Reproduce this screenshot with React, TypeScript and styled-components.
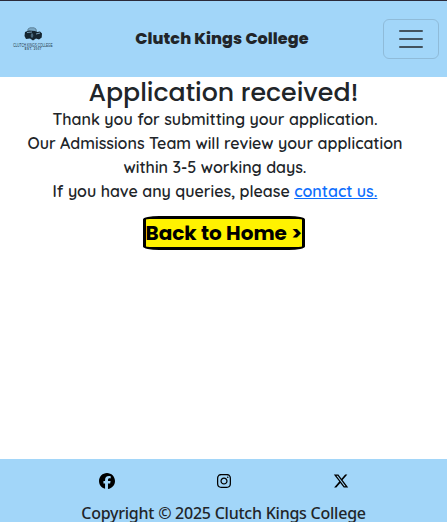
import React from 'react';
import styled, { createGlobalStyle } from 'styled-components';
import { FaFacebook, FaInstagram, FaXTwitter } from 'react-icons/fa6';

const GlobalStyle = createGlobalStyle`
  * { box-sizing: border-box; }
  html, body { margin: 0; }
  body { color: #212529; background: #fff; overflow: hidden; }
`;

const Page = styled.div`
  display: flex;
  flex-direction: column;
  height: 522px;
  border-top: 1px solid #2b2a3a;
  overflow: hidden;
`;

const Navbar = styled.header`
  display: flex;
  align-items: center;
  justify-content: space-between;
  height: 76px;
  flex: none;
  padding: 0 8px;
  background: #a2d6f9;
`;

const LogoLink = styled.a`
  display: flex;
  width: 50px;
  height: 50px;
`;

const Brand = styled.span`
  margin-left: 3px;
  font: 800 16px/24px Poppins, Inter, sans-serif;
  letter-spacing: 0.08px;
  white-space: nowrap;
`;

const Toggler = styled.button`
  display: flex;
  align-items: center;
  justify-content: center;
  width: 56px;
  height: 40px;
  padding: 0;
  border: 1px solid #8fbbd9;
  border-radius: 6px;
  background: transparent;
`;

const Main = styled.main`
  display: flex;
  flex-direction: column;
  align-items: center;
  flex: 1;
  text-align: center;
`;

const Title = styled.h1`
  height: 30px;
  margin: 0;
  padding-top: 1px;
  font: 500 25.22px/30px Poppins, Inter, sans-serif;
  white-space: nowrap;
`;

const Message = styled.p`
  margin: 0;
  font: 600 16px/24px Quicksand, Lato, sans-serif;
  white-space: nowrap;
`;

const Messages = styled.div`
  display: flex;
  flex-direction: column;
  align-items: center;
  padding-right: 17px;
`;

const ContactLink = styled.a`
  color: #0d6efd;
  text-decoration: underline;
`;

const HomeButton = styled.button`
  width: 162px;
  height: 34px;
  margin-top: 13px;
  padding: 0;
  border: 3px solid #000;
  border-radius: 10%;
  background: #fff200;
  color: #000;
  font: 700 20px/28px Poppins, Inter, sans-serif;
  white-space: nowrap;
`;

const Footer = styled.footer`
  flex: none;
  height: 63px;
  padding: 14px 48px 0;
  background: #a2d6f9;
  text-align: center;
`;

const Socials = styled.nav`
  display: grid;
  grid-template-columns: repeat(3, 117px);
  justify-content: center;
  justify-items: center;
  height: 16px;
`;

const SocialLink = styled.a`
  display: flex;
  color: #000;
`;

const Copyright = styled.p`
  margin: 12px 0 0;
  font: 500 16px/24px 'Segoe UI', 'Noto Sans', sans-serif;
  letter-spacing: -0.24px;
  white-space: nowrap;
`;

const Logo = () => (
  <svg width="50" height="50" viewBox="0 0 50 50" aria-label="Clutch Kings College">
    <path d="M19.5 19l.5-4 2-1.2h4l2 1.2.5 3" fill="#7ba9c6" stroke="#53758a" strokeWidth=".8" />
    <path d="M17 18l4-1.500 6 .5 2 1 3-.5 2 2-.3 4-2.700 2-3-1-3 2-3-2-4 .5-1.500-3z" fill="#152530" />
    <path d="M19 18.500l5-.5M28 20l4-1" stroke="#91bdda" strokeWidth=".8" />
    <ellipse cx="24" cy="21.500" rx="1.300" ry="2.300" fill="#48677b" />
    <text x="5.2" y="32.500" textLength="39.500" fontFamily="Liberation Sans, sans-serif" fontWeight="400" fontSize="5" lengthAdjust="spacingAndGlyphs" fill="#263b4a">CLUTCH KINGS COLLEGE</text>
    <text x="16.8" y="36.200" textLength="16.500" fontFamily="Liberation Sans, sans-serif" fontWeight="700" fontSize="2.800" fill="#32495a">EST. 2007</text>
  </svg>
);

const MenuIcon = () => (
  <svg width="30" height="30" viewBox="0 0 30 30">
    <path d="M4 7h22M4 15h22M4 23h22" stroke="#212529" strokeOpacity=".75" strokeWidth="2" strokeLinecap="round" />
  </svg>
);

export default function App() {
  return (
    <>
      <GlobalStyle />
      <Page>
        <Navbar>
          <LogoLink><Logo /></LogoLink>
          <Brand>Clutch Kings College</Brand>
          <Toggler aria-label="Toggle navigation"><MenuIcon /></Toggler>
        </Navbar>
        <Main>
          <Title>Application received!</Title>
          <Messages>
            <Message>Thank you for submitting your application.</Message>
            <Message>Our Admissions Team will review your application</Message>
            <Message>within 3-5 working days.</Message>
            <Message>If you have any queries, please <ContactLink>contact us.</ContactLink></Message>
          </Messages>
          <HomeButton>Back to Home &gt;</HomeButton>
        </Main>
        <Footer>
          <Socials>
            <SocialLink aria-label="Facebook"><FaFacebook size={16} /></SocialLink>
            <SocialLink aria-label="Instagram"><FaInstagram size={16} /></SocialLink>
            <SocialLink aria-label="X"><FaXTwitter size={16} /></SocialLink>
          </Socials>
          <Copyright>Copyright © 2025 Clutch Kings College</Copyright>
        </Footer>
      </Page>
    </>
  );
}
